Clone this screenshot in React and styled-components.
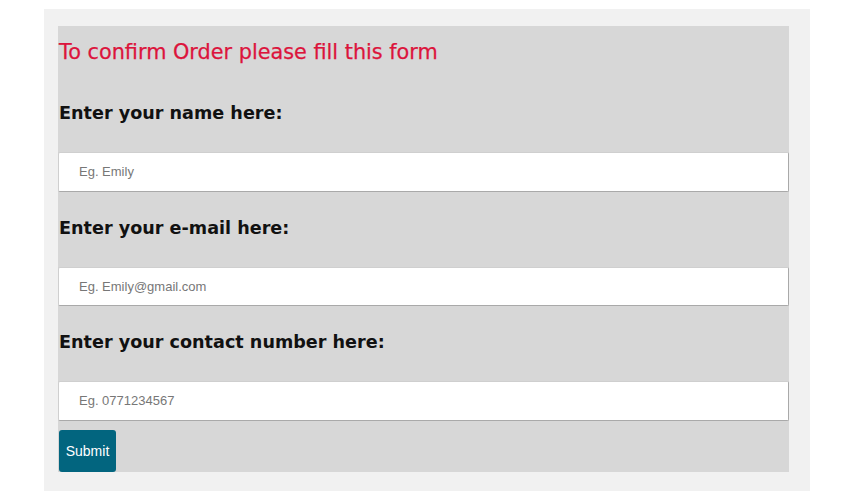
import React from "react";
import styled, { createGlobalStyle } from "styled-components";

const GlobalStyle = createGlobalStyle`
  body {
    margin: 0;
    background: #ffffff;
    font-family: "DejaVu Sans", Verdana, sans-serif;
  }
`;

const Page = styled.div`
  width: 766px;
  height: 482px;
  margin: 9px 0 0 44px;
  padding: 17px 21px 0 14px;
  box-sizing: border-box;
  background: #f1f1f1;
`;

const Card = styled.form`
  background: #d7d7d7;
  padding: 14px 0 0 0;
  display: flex;
  flex-direction: column;
  align-items: stretch;
  height: 446px;
  box-sizing: border-box;
`;

const Title = styled.h2`
  margin: 0 0 37px 1px;
  font-size: 20.8px;
  line-height: 24px;
  font-weight: normal;
  color: #dc143c;
  -webkit-text-stroke: 0.25px #dc143c;
`;

const Label = styled.h3`
  margin: 0 0 27px 1px;
  font-size: 17.6px;
  line-height: 24px;
  font-weight: bold;
  color: #111111;
`;

const Input = styled.input`
  box-sizing: border-box;
  width: 100%;
  height: 40px;
  margin: 0 0 ${props => props.gap}px 0;
  padding: 0 0 0 20px;
  border: 1px solid #cfcfcf;
  border-right-color: #a9a9a9;
  border-bottom-color: #a9a9a9;
  border-radius: 2px;
  background: #ffffff;
  font-family: "Liberation Sans", Arial, sans-serif;
  font-size: 13px;
  color: #222;

  &::placeholder {
    color: #777777;
  }
`;

const Button = styled.button`
  align-self: flex-start;
  width: 57px;
  height: 43px;
  margin-left: 1px;
  padding: 0;
  border: none;
  border-radius: 3px;
  background: #02657f;
  color: #ffffff;
  font-family: "Liberation Sans", Arial, sans-serif;
  font-size: 14px;
  cursor: pointer;
`;

const fields = [
  { label: "Enter your name here:", placeholder: "Eg. Emily", gap: 24 },
  { label: "Enter your e-mail here:", placeholder: "Eg. Emily@gmail.com", gap: 24 },
  { label: "Enter your contact number here:", placeholder: "Eg. 0771234567", gap: 9 }
];

export default function App() {
  return (
    <>
      <GlobalStyle />
      <Page>
        <Card onSubmit={e => e.preventDefault()}>
          <Title>To confirm Order please fill this form</Title>
          {fields.map(f => (
            <React.Fragment key={f.label}>
              <Label>{f.label}</Label>
              <Input type="text" placeholder={f.placeholder} gap={f.gap} />
            </React.Fragment>
          ))}
          <Button type="submit">Submit</Button>
        </Card>
      </Page>
    </>
  );
}
